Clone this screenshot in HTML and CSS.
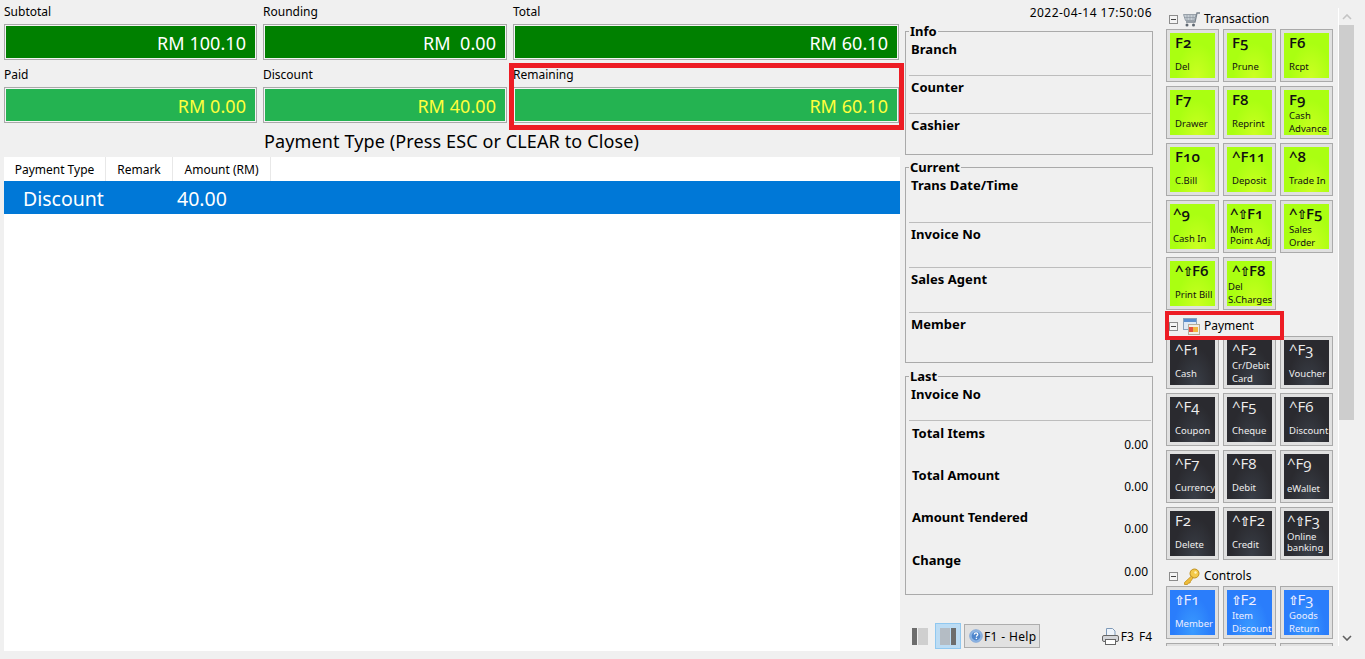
FILE: index.html
```html
<!DOCTYPE html>
<html lang="en">
<head>
<meta charset="utf-8">
<title>POS Payment</title>
<link rel="stylesheet" href="styles.css">
</head>
<body>
<div class="app">
  <main class="left">
    <section class="totals">
      <div class="stat"><div class="stat-label">Subtotal</div><div class="stat-box dark">RM 100.10</div></div>
      <div class="stat"><div class="stat-label">Rounding</div><div class="stat-box dark">RM&nbsp;&nbsp;0.00</div></div>
      <div class="stat"><div class="stat-label">Total</div><div class="stat-box dark">RM 60.10</div></div>
      <div class="stat"><div class="stat-label">Paid</div><div class="stat-box light">RM 0.00</div></div>
      <div class="stat"><div class="stat-label">Discount</div><div class="stat-box light">RM 40.00</div></div>
      <div class="stat"><div class="stat-label">Remaining</div><div class="stat-box light">RM 60.10</div></div>
    </section>
    <h1 class="title">Payment Type (Press ESC or CLEAR to Close)</h1>
    <section class="table">
      <div class="thead">
        <div class="th th-type">Payment Type</div>
        <div class="th th-remark">Remark</div>
        <div class="th th-amount">Amount (RM)</div>
      </div>
      <div class="trow">
        <div class="td-type">Discount</div>
        <div class="td-amount">40.00</div>
      </div>
    </section>
  </main>

  <aside class="middle">
    <div class="clock">2022-04-14 17:50:06</div>
    <fieldset class="group group-info">
      <legend>Info</legend>
      <div class="info-row rule">Branch</div>
      <div class="info-row rule">Counter</div>
      <div class="info-row">Cashier</div>
    </fieldset>
    <fieldset class="group group-current">
      <legend>Current</legend>
      <div class="info-row first rule">Trans Date/Time</div>
      <div class="info-row tall rule">Invoice No</div>
      <div class="info-row tall rule">Sales Agent</div>
      <div class="info-row tall">Member</div>
    </fieldset>
    <fieldset class="group group-last">
      <legend>Last</legend>
      <div class="info-row rule">Invoice No</div>
      <div class="sum"><div class="sum-name">Total Items</div><div class="sum-val">0.00</div></div>
      <div class="sum"><div class="sum-name">Total Amount</div><div class="sum-val">0.00</div></div>
      <div class="sum sum-wide"><div class="sum-name">Amount Tendered</div><div class="sum-val">0.00</div></div>
      <div class="sum"><div class="sum-name">Change</div><div class="sum-val">0.00</div></div>
    </fieldset>
    <div class="toolbar">
      <span class="layout-btn"><svg width="16" height="17" viewBox="0 0 16 17"><rect width="5" height="17" fill="#6d6d6d"/><rect x="6" width="10" height="17" fill="#cfcfcf"/></svg></span>
      <span class="layout-btn active"><svg width="16" height="17" viewBox="0 0 16 17"><rect width="10" height="17" fill="#b4bcc4"/><rect x="11" width="5" height="17" fill="#6d6d6d"/></svg></span>
      <span class="help-btn">
        <svg width="14" height="14" viewBox="0 0 16 16"><circle cx="8" cy="8" r="7.2" fill="#8fb6e4" stroke="#7fa6d8"/><circle cx="8" cy="8" r="5" fill="#4f86cc"/><path d="M6 6.400c0-1.300 1-1.900 2.100-1.900s2 .7 2 1.700c0 1.300-1.600 1.300-1.600 2.600" fill="none" stroke="#fff" stroke-width="1.400"/><rect x="7.700" y="10" width="1.500" height="1.500" fill="#fff"/></svg>
        <span class="help-text">F1 - Help</span>
      </span>
      <span class="print-group">
        <svg width="17" height="17" viewBox="0 0 17 17"><path d="M4.500 7.500V.5h6l2.500 2.500v4.500z" fill="#eef4fb" stroke="#7f9ab8"/><rect x=".5" y="7.500" width="16" height="6" rx="1.500" fill="#d4d6da" stroke="#666"/><rect x="3.500" y="11.500" width="10" height="5" fill="#fff" stroke="#666"/></svg>
        <span>F3</span><span class="f4">F4</span>
      </span>
    </div>
  </aside>

  <nav class="right">
    <div class="tree">
      <div class="tree-head">
        <span class="collapse"></span>
        <svg class="tree-icon" width="17" height="15" viewBox="0 0 17 15"><g transform="matrix(-1 0 0 1 17 0)"><path d="M0 1h3l2 9h9" fill="none" stroke="#7a848e" stroke-width="1.300"/><path d="M4 2.500h12.500l-2 6H5.500z" fill="#c6ced4" stroke="#87919a" stroke-width=".8"/><path d="M7 3v5M10 3v5M13 3v5M5 5.500h11" stroke="#87919a" stroke-width=".6"/><circle cx="6.500" cy="13" r="1.500" fill="#5d6670"/><circle cx="13" cy="13" r="1.500" fill="#5d6670"/></g></svg>
        <span class="tree-name">Transaction</span>
      </div>
      <div class="tiles lime">
        <div class="tile"><div class="face"><b>F2</b><span>Del</span></div></div>
        <div class="tile"><div class="face"><b>F5</b><span>Prune</span></div></div>
        <div class="tile"><div class="face"><b>F6</b><span>Rcpt</span></div></div>
        <div class="tile"><div class="face"><b>F7</b><span>Drawer</span></div></div>
        <div class="tile"><div class="face"><b>F8</b><span>Reprint</span></div></div>
        <div class="tile"><div class="face two"><b>F9</b><span>Cash<br>Advance</span></div></div>
        <div class="tile"><div class="face"><b>F10</b><span>C.Bill</span></div></div>
        <div class="tile"><div class="face"><b>^F11</b><span>Deposit</span></div></div>
        <div class="tile"><div class="face"><b>^8</b><span>Trade In</span></div></div>
        <div class="tile"><div class="face snug low"><b>^9</b><span>Cash In</span></div></div>
        <div class="tile"><div class="face snug dense"><b>^<i>⇧</i>F1</b><span>Mem<br>Point Adj</span></div></div>
        <div class="tile"><div class="face up"><b>^<i>⇧</i>F5</b><span>Sales<br>Order</span></div></div>
        <div class="tile"><div class="face"><b>^<i>⇧</i>F6</b><span>Print Bill</span></div></div>
        <div class="tile"><div class="face tight up"><b class="key-in">^<i>⇧</i>F8</b><span>Del<br>S.Charges</span></div></div>
      </div>
      <div class="tree-head">
        <span class="collapse"></span>
        <svg class="tree-icon" width="17" height="17" viewBox="0 0 17 17"><rect x=".5" y=".5" width="13" height="11" fill="#dfe9f5" stroke="#8aa2bd"/><rect x="1" y="1" width="12" height="3" fill="#5a8fd0"/><rect x="5.500" y="6.500" width="11" height="10" fill="#f2efe6" stroke="#b5ad9a"/><rect x="6" y="9" width="5" height="5" fill="#e8503f"/><rect x="10" y="9" width="5" height="5" fill="#f2b640"/></svg>
        <span class="tree-name">Payment</span>
      </div>
      <div class="tiles coal">
        <div class="tile"><div class="face"><b>^F1</b><span>Cash</span></div></div>
        <div class="tile"><div class="face two"><b>^F2</b><span>Cr/Debit<br>Card</span></div></div>
        <div class="tile"><div class="face"><b>^F3</b><span>Voucher</span></div></div>
        <div class="tile"><div class="face"><b>^F4</b><span>Coupon</span></div></div>
        <div class="tile"><div class="face"><b>^F5</b><span>Cheque</span></div></div>
        <div class="tile"><div class="face"><b>^F6</b><span>Discount</span></div></div>
        <div class="tile"><div class="face"><b>^F7</b><span>Currency</span></div></div>
        <div class="tile"><div class="face"><b>^F8</b><span>Debit</span></div></div>
        <div class="tile"><div class="face snug low"><b>^F9</b><span>eWallet</span></div></div>
        <div class="tile"><div class="face"><b>F2</b><span>Delete</span></div></div>
        <div class="tile"><div class="face"><b>^<i>⇧</i>F2</b><span>Credit</span></div></div>
        <div class="tile"><div class="face snug dense"><b>^<i>⇧</i>F3</b><span>Online<br>banking</span></div></div>
      </div>
      <div class="tree-head">
        <span class="collapse"></span>
        <svg class="tree-icon" width="17" height="17" viewBox="0 0 17 17"><circle cx="11.500" cy="5.500" r="4.500" fill="#f3c94a" stroke="#c08f1c"/><circle cx="12.500" cy="4.500" r="1.200" fill="#fff3c0"/><path d="M8.500 8 1.500 14.500v2h3l1-1.500h1.500l.5-1.500L10 10z" fill="#eebc3a" stroke="#c08f1c" stroke-width=".8"/></svg>
        <span class="tree-name">Controls</span>
      </div>
      <div class="tiles sky">
        <div class="tile"><div class="face"><b><i>⇧</i>F1</b><span>Member</span></div></div>
        <div class="tile"><div class="face mid"><b><i>⇧</i>F2</b><span>Item<br>Discount</span></div></div>
        <div class="tile"><div class="face mid"><b><i>⇧</i>F3</b><span>Goods<br>Return</span></div></div>
        <div class="tile"></div>
        <div class="tile"></div>
        <div class="tile"></div>
      </div>
    </div>
    <div class="scrollbar">
      <svg class="arrow arrow-up" width="10" height="6" viewBox="0 0 10 6"><path d="M1 5l4-4 4 4" fill="none" stroke="#c4c4c4" stroke-width="1.600"/></svg>
      <div class="thumb"></div>
      <svg class="arrow" width="10" height="6" viewBox="0 0 10 6"><path d="M1 1l4 4 4-4" fill="none" stroke="#606060" stroke-width="1.600"/></svg>
    </div>
  </nav>
</div>
<div class="mark mark-remaining"></div>
<div class="mark mark-payment"></div>
</body>
</html>
```
FILE: styles.css
```css
* { box-sizing: border-box; }
html, body { margin: 0; height: 100%; overflow: hidden; }
body { background: #f0f0f0; font-family: "Noto Sans", sans-serif; font-size: 12px; color: #000; position: relative; }
.app { display: flex; height: 659px; }

.left { width: 905px; padding: 0 5px 8px 4px; display: flex; flex-direction: column; }
.totals { display: grid; grid-template-columns: 253px 244px 386px; column-gap: 6px; }
.stat { height: 63px; padding-top: 4px; }
.stat-label { height: 20px; line-height: 16px; font-size: 12px; }
.stat-box { height: 36px; border: 1px solid #a9a9a9; line-height: 36px; text-align: right; padding-right: 10px; font-size: 18px; letter-spacing: .05px; box-shadow: inset 0 0 0 1px #f4f4f4; }
.stat-box.dark { background: #008000; color: #fff; }
.stat-box.light { background: #24b351; color: #ffff3c; }
.title { margin: 3px 0 0; height: 25px; padding-left: 260px; font-size: 18px; font-weight: 400; line-height: 25px; letter-spacing: .12px; }
.table { flex: 1; background: #fff; margin-top: 3px; }
.thead { display: flex; height: 24px; }
.th { line-height: 26px; text-align: center; border-right: 1px solid #e8e8e8; }
.th-type { width: 102px; }
.th-remark { width: 67px; }
.th-amount { width: 98px; }
.trow { height: 33px; background: #0078d7; color: #fff; display: flex; font-size: 19.5px; line-height: 35px; }
.td-type { width: 173px; padding-left: 19px; }

.middle { width: 255px; padding-right: 7px; display: flex; flex-direction: column; }
.clock { height: 19px; margin-top: 4px; text-align: right; line-height: 18px; padding-right: 1px; letter-spacing: .47px; }
.group { margin: 0; padding: 0 1px 0 3px; border: 1px solid #aaa; min-width: 0; }
.group legend { padding: 0 1px; margin-left: 0; font-weight: 700; font-size: 13px; line-height: 16px; height: 16px; }
.group-info { height: 132px; margin-bottom: 4px; }
.group-current { height: 204px; margin-bottom: 5px; }
.group-last { height: 227px; }
.info-row { height: 37px; font-weight: 700; font-size: 13px; line-height: 18px; padding: 1px 0 0 2px; letter-spacing: .05px; }
.info-row.rule { border-bottom: 1px solid #bdbdbd; margin-bottom: 1px; }
.info-row.first { height: 48px; }
.info-row.tall { height: 44px; }
.sum { height: 42px; padding: 2px 3px 0 3px; }
.sum-wide { height: 43px; }
.sum-name { font-weight: 700; font-size: 13px; line-height: 18px; }
.sum-val { text-align: right; line-height: 14px; margin-top: -4px; }
.toolbar { display: flex; align-items: center; height: 26px; margin-top: 28px; padding-left: 5px; }
.layout-btn { width: 26px; height: 26px; display: flex; align-items: center; justify-content: center; border: 1px solid transparent; margin-right: 3px; }
.layout-btn:first-child { width: 20px; margin-right: 5px; }
.layout-btn.active { background: #bcdcf4; border-color: #90c8f0; }
.help-btn { display: flex; align-items: center; gap: 1px; height: 24px; width: 76px; padding-left: 4px; background: #e1e1e1; border: 1px solid #adadad; }
.help-text { letter-spacing: .35px; }
.print-group { margin-left: auto; display: flex; align-items: center; gap: 2px; padding-right: 1px; }
.f4 { margin-left: 3px; }

.right { width: 205px; padding-top: 8px; height: 646px; display: flex; overflow: hidden; }
.tree { width: 179px; padding: 3px 0 0 6px; border-right: 1px solid #fff; height: 638px; overflow: hidden; }
.tree-head { height: 16px; display: flex; align-items: center; margin-bottom: 2px; }
.collapse { width: 9px; height: 9px; margin: 0 5px 0 3px; border: 1px solid #8c8c8c; position: relative; background: #f4f4f4; flex: none; }
.collapse::after { content: ""; position: absolute; left: 1px; right: 1px; top: 3px; height: 1px; background: #444; }
.tree-icon { margin-right: 4px; flex: none; }
.tree-name { font-size: 12px; line-height: 16px; }
.tiles { display: grid; grid-template-columns: repeat(3, 53px); gap: 4px; margin-bottom: 8px; }
.tile { height: 53px; border: 1px solid #aaa; background: #e0e0e0; padding: 3px; }
.face { height: 45px; padding: 0 0 5px 5px; display: flex; flex-direction: column; justify-content: space-between; overflow: hidden; white-space: nowrap; }
.face.low { padding-bottom: 4px; }
.face.two { padding-bottom: 0; }
.face.two span { margin-top: 1px; }
.face.up { padding-bottom: 0; }
.face.up span { margin-top: -5px; }
.face.mid { padding-bottom: 0; }
.face.mid span { margin-top: -1px; }
.face.snug { padding-left: 3px; }
.face.tight { padding-left: 1px; }
.face.dense { padding-bottom: 3px; }
.face.dense span { line-height: 11px; }
.key-in { padding-left: 4px; }
.face b { font-family: "Open Sans", sans-serif; font-variant-numeric: oldstyle-nums; font-weight: 600; font-size: 15px; line-height: 18px; }
.face b i { font-style: normal; font-size: 13px; font-family: "DejaVu Sans", sans-serif; font-weight: 700; letter-spacing: -1.500px; margin-left: -1px; }
.face span { font-size: 9.5px; line-height: 13px; }
.lime .face { background: radial-gradient(ellipse at 60% 100%, #ccff22 0%, #aaff11 55%); color: #111; }
.coal .face { background: radial-gradient(ellipse at 55% 100%, #3a3f48 0%, #2a2a2f 60%); color: #eee; }
.coal .face b { font-weight: 500; }
.sky .face { background: radial-gradient(ellipse at 50% 90%, #3a9bff 0%, #2a7dfb 60%); color: #eef; }
.sky .face b { font-weight: 500; }

.scrollbar { width: 15px; background: #f0f0f0; display: flex; flex-direction: column; align-items: center; height: 638px; }
.arrow { flex: none; margin: 0 0 5px; }
.arrow-up { margin: 6px 0 5px; }
.thumb { width: 15px; flex: none; height: 395px; background: #cdcdcd; margin-bottom: auto; }

.mark { position: absolute; pointer-events: none; }
.mark-remaining { left: 509px; top: 63px; width: 395px; height: 67px; border: 5px solid #ed1c24; }
.mark-payment { left: 1165px; top: 311px; width: 119px; height: 29px; border: 4px solid #ed1c24; }
```
